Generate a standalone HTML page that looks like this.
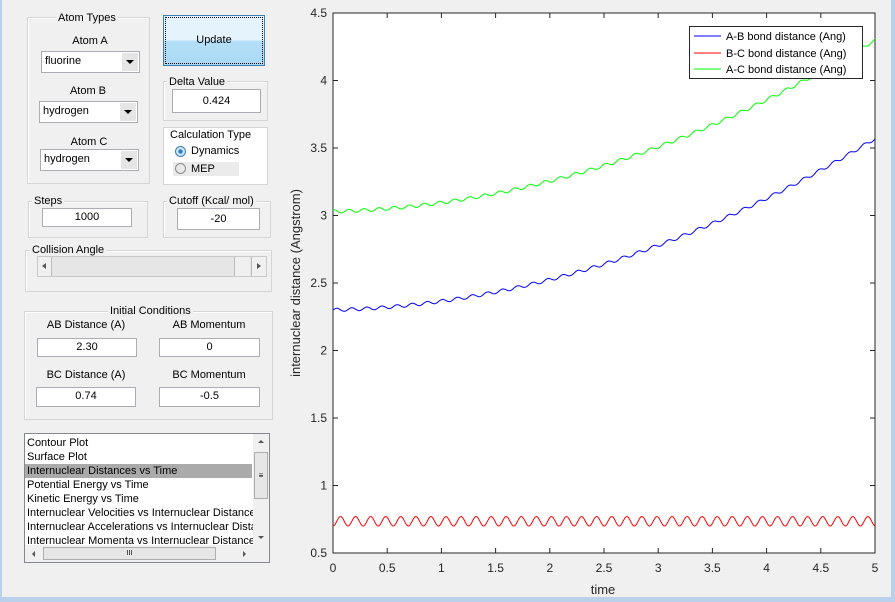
<!DOCTYPE html>
<html><head><meta charset="utf-8"><style>
*{margin:0;padding:0;box-sizing:border-box}
body{width:895px;height:602px;background:#f0f0f0;position:relative;overflow:hidden;font-family:"Liberation Sans",sans-serif;font-size:11px;color:#000}
.a{position:absolute}
.grp{position:absolute;border:1px solid #d5d5d5;box-shadow:1px 1px 0 #fff inset}
.gt{position:absolute;background:#f0f0f0;padding:0 2px;font-size:11px;line-height:12px}
.inp{position:absolute;background:#fff;border:1px solid #abadb3;text-align:center;line-height:17px;font-size:11px}
.dd{position:absolute;background:#fff;border:1px solid #abadb3;font-size:11px;line-height:19px;padding-left:3px}
.dd b{position:absolute;right:1px;top:1px;bottom:1px;width:16px;background:#e5e5e5}
.dd b:after{content:"";position:absolute;left:4px;top:7px;border-left:4px solid transparent;border-right:4px solid transparent;border-top:4px solid #000}
.lbl{position:absolute;text-align:center;font-size:11px}
</style></head><body>
<div class="a" style="left:0;top:0;width:2px;height:602px;background:#b9d1ea"></div>
<div class="a" style="left:891px;top:0;width:4px;height:602px;background:#b9d1ea"></div>
<div class="a" style="left:0;top:597px;width:895px;height:5px;background:#b9d1ea"></div>

<div class="grp" style="left:27px;top:17px;width:123px;height:167px"></div>
<div class="gt" style="left:56px;top:12px">Atom Types</div>
<div class="lbl" style="left:41px;top:35px;width:98px">Atom A</div>
<div class="dd" style="left:41px;top:51px;width:99px;height:22px">fluorine<b></b></div>
<div class="lbl" style="left:39px;top:85px;width:98px">Atom B</div>
<div class="dd" style="left:39px;top:101px;width:99px;height:22px">hydrogen<b></b></div>
<div class="lbl" style="left:40px;top:136px;width:98px">Atom C</div>
<div class="dd" style="left:40px;top:149px;width:99px;height:22px">hydrogen<b></b></div>

<div class="a" style="left:163px;top:15px;width:102px;height:51px;border:1px solid #3c7fb1;background:linear-gradient(#e5f4fc 0,#e5f4fc 50%,#b5dff7 50%,#aad9f5 100%);text-align:center;line-height:49px;outline:1px dotted #000;outline-offset:-3px">Update</div>

<div class="grp" style="left:163px;top:81px;width:105px;height:40px"></div>
<div class="gt" style="left:167px;top:76px">Delta Value</div>
<div class="inp" style="left:172px;top:89px;width:89px;height:24px;line-height:22px">0.424</div>

<div class="a" style="left:163px;top:127px;width:105px;height:58px;border:1px solid #d5d5d5;background:#fff"></div>
<div class="gt" style="left:168px;top:129px;background:#fff">Calculation Type</div>
<div class="a" style="left:173px;top:162px;width:66px;height:14px;background:#ebebeb"></div>
<div class="a" style="left:175px;top:146px;width:11px;height:11px;border-radius:50%;border:1px solid #3c7fb1;background:radial-gradient(#2a80c8 30%,#cfe6f6 40%)"></div>
<div class="a" style="left:191px;top:145px">Dynamics</div>
<div class="a" style="left:175px;top:163px;width:11px;height:11px;border-radius:50%;border:1px solid #8a8a8a;background:#e8e8e8"></div>
<div class="a" style="left:191px;top:163px">MEP</div>

<div class="grp" style="left:28px;top:201px;width:120px;height:37px"></div>
<div class="gt" style="left:32px;top:195px">Steps</div>
<div class="inp" style="left:42px;top:208px;width:90px;height:19px">1000</div>

<div class="grp" style="left:163px;top:201px;width:108px;height:37px"></div>
<div class="gt" style="left:167px;top:195px">Cutoff (Kcal/ mol)</div>
<div class="inp" style="left:177px;top:208px;width:83px;height:22px;line-height:20px">-20</div>

<div class="grp" style="left:25px;top:250px;width:247px;height:42px"></div>
<div class="gt" style="left:30px;top:244px">Collision Angle</div>
<div class="a" style="left:37px;top:256px;width:230px;height:21px;background:#e6e6e6;border:1px solid #c8c8c8"></div>
<div class="a" style="left:38px;top:257px;width:14px;height:19px;background:#f0f0f0;border-right:1px solid #bbb"></div>
<div class="a" style="left:42px;top:263px;border-top:3px solid transparent;border-bottom:3px solid transparent;border-right:4px solid #555"></div>
<div class="a" style="left:234px;top:257px;width:16px;height:19px;background:#f0f0f0;border-left:1px solid #bbb"></div>
<div class="a" style="left:251px;top:257px;width:15px;height:19px;background:#f0f0f0;border-left:1px solid #bbb"></div>
<div class="a" style="left:257px;top:263px;border-top:3px solid transparent;border-bottom:3px solid transparent;border-left:4px solid #555"></div>

<div class="grp" style="left:24px;top:311px;width:249px;height:109px"></div>
<div class="gt" style="left:108px;top:305px">Initial Conditions</div>
<div class="lbl" style="left:36px;top:319px;width:100px">AB Distance (A)</div>
<div class="lbl" style="left:159px;top:319px;width:100px">AB Momentum</div>
<div class="inp" style="left:37px;top:338px;width:100px;height:19px">2.30</div>
<div class="inp" style="left:159px;top:338px;width:101px;height:19px">0</div>
<div class="lbl" style="left:36px;top:369px;width:100px">BC Distance (A)</div>
<div class="lbl" style="left:159px;top:369px;width:100px">BC Momentum</div>
<div class="inp" style="left:36px;top:387px;width:100px;height:20px">0.74</div>
<div class="inp" style="left:159px;top:387px;width:101px;height:20px">-0.5</div>

<div class="a" style="left:24px;top:433px;width:246px;height:130px;background:#fff;border:1px solid #828790;font-size:11px;line-height:14px">
<div style="padding-left:2px;margin-top:2px">Contour Plot</div>
<div style="padding-left:2px">Surface Plot</div>
<div style="padding-left:2px;background:#aaa;width:227px">Internuclear Distances vs Time</div>
<div style="padding-left:2px">Potential Energy vs Time</div>
<div style="padding-left:2px">Kinetic Energy vs Time</div>
<div style="padding-left:2px;white-space:nowrap;overflow:hidden;width:228px">Internuclear Velocities vs Internuclear Distance</div>
<div style="padding-left:2px;white-space:nowrap;overflow:hidden;width:228px">Internuclear Accelerations vs Internuclear Distance</div>
<div style="padding-left:2px;white-space:nowrap;overflow:hidden;width:228px">Internuclear Momenta vs Internuclear Distance</div>
</div>
<div class="a" style="left:253px;top:434px;width:16px;height:111px;background:#f0f0f0"></div>
<div class="a" style="left:258px;top:440px;border-left:3px solid transparent;border-right:3px solid transparent;border-bottom:3px solid #555"></div>
<div class="a" style="left:258px;top:536px;border-left:3px solid transparent;border-right:3px solid transparent;border-top:3px solid #555"></div>
<div class="a" style="left:254px;top:452px;width:14px;height:47px;background:#e6e6e6;border:1px solid #adadad;text-align:center;font-size:8px;line-height:45px">≡</div>
<div class="a" style="left:25px;top:545px;width:244px;height:17px;background:#f0f0f0"></div>
<div class="a" style="left:32px;top:551px;border-top:3px solid transparent;border-bottom:3px solid transparent;border-right:3px solid #555"></div>
<div class="a" style="left:243px;top:551px;border-top:3px solid transparent;border-bottom:3px solid transparent;border-left:3px solid #555"></div>
<div class="a" style="left:43px;top:547px;width:173px;height:13px;background:#e6e6e6;border:1px solid #adadad;text-align:center;font-size:7px;line-height:11px">III</div>

<svg class="a" style="left:0;top:0" width="895" height="602">
<rect x="333" y="13" width="542" height="540" fill="#fff" stroke="#262626" stroke-width="1"/>
<g id="ticks" stroke="#262626"></g>
<path id="pr" fill="none" stroke="#f00" stroke-width="1"/>
<path id="pb" fill="none" stroke="#00f" stroke-width="1"/>
<path id="pg" fill="none" stroke="#0f0" stroke-width="1"/>
<rect x="689.5" y="26.5" width="173" height="52" fill="#fff" stroke="#262626"/>
<line x1="694" y1="36" x2="721" y2="36" stroke="#00f"/>
<line x1="694" y1="53" x2="721" y2="53" stroke="#f00"/>
<line x1="694" y1="69" x2="721" y2="69" stroke="#0f0"/>
<g font-family="Liberation Sans" font-size="11" fill="#000">
<text x="726" y="40">A-B bond distance (Ang)</text>
<text x="726" y="57">B-C bond distance (Ang)</text>
<text x="726" y="73">A-C bond distance (Ang)</text>
</g>
<g id="lab" font-family="Liberation Sans" font-size="12" fill="#262626"></g>
<text x="603" y="594" text-anchor="middle" font-family="Liberation Sans" font-size="13" fill="#262626">time</text>
<text transform="translate(300,283) rotate(-90)" text-anchor="middle" font-family="Liberation Sans" font-size="13" fill="#262626">internuclear distance (Angstrom)</text>
</svg>
<script>
var X=function(t){return 333+t*108.4},Y=function(v){return 553-(v-0.5)*135};
var tk='',lb='';
for(var i=0;i<=10;i++){var t=i*0.5,x=X(t);tk+='<line x1="'+x+'" y1="553" x2="'+x+'" y2="548"/><line x1="'+x+'" y1="13" x2="'+x+'" y2="18"/>';lb+='<text x="'+x+'" y="572" text-anchor="middle">'+t+'</text>';}
for(var j=0;j<=8;j++){var v=0.5+j*0.5,y=Y(v);tk+='<line x1="333" y1="'+y+'" x2="338" y2="'+y+'"/><line x1="875" y1="'+y+'" x2="870" y2="'+y+'"/>';lb+='<text x="327" y="'+(y+4)+'" text-anchor="end">'+v+'</text>';}
document.getElementById('ticks').innerHTML=tk;document.getElementById('lab').innerHTML=lb;
var r='',b='',g='',P=0.139;
for(var k=0;k<=1000;k++){var t=k*0.005;
var rv=0.735+0.035*(-Math.cos(2*Math.PI*t/P));
var base=2.3+0.018*t+0.0472*t*t;
var bv=base+0.012*Math.sin(2*Math.PI*t/P);
var gv=base+0.73+0.012*Math.sin(2*Math.PI*t/P+1.2);
var c=k?'L':'M';r+=c+X(t).toFixed(1)+' '+Y(rv).toFixed(1);b+=c+X(t).toFixed(1)+' '+Y(bv).toFixed(1);g+=c+X(t).toFixed(1)+' '+Math.max(13,Y(gv)).toFixed(1);}
document.getElementById('pr').setAttribute('d',r);document.getElementById('pb').setAttribute('d',b);document.getElementById('pg').setAttribute('d',g);
</script>
</body></html>
